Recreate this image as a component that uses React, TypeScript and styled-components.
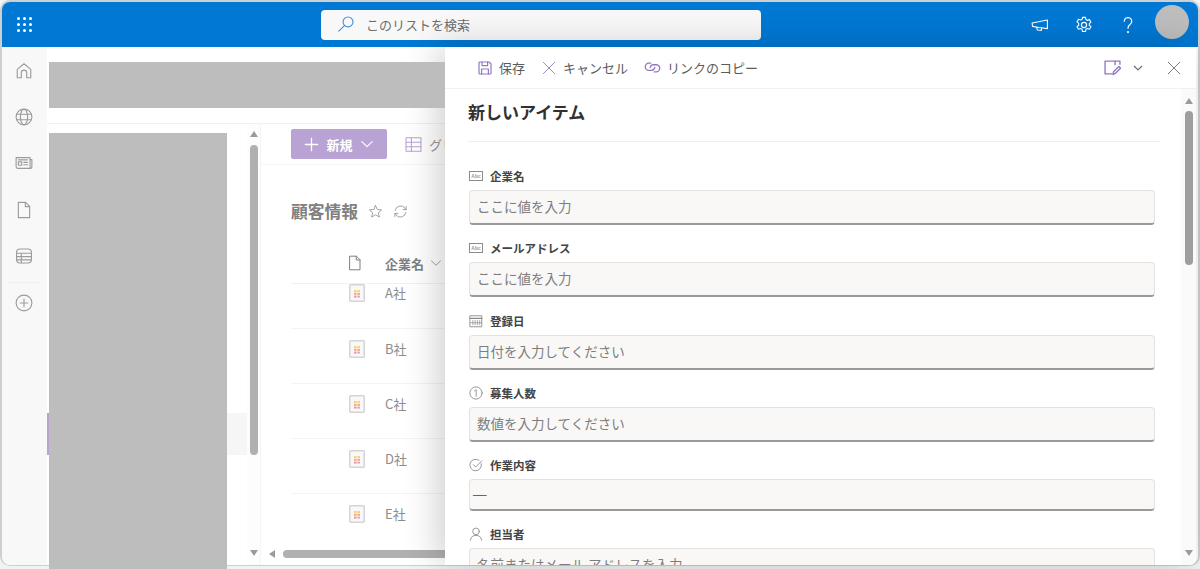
import * as React from 'react'
import styled, { createGlobalStyle } from 'styled-components'

const GlobalStyle = createGlobalStyle`
  html, body {
    margin: 0;
    height: 100%;
    overflow: hidden;
    background: #f2f2f2;
  }
  body {
    font-family: "Noto Sans CJK JP", "Noto Sans", sans-serif;
  }
  * {
    box-sizing: border-box;
  }
`

const AppWindow = styled.div`
  width: 1200px;
  height: 566px;
  border: 2px solid #cfcfcf;
  border-bottom-width: 1px;
  border-radius: 10px;
  background: #fff;
  display: flex;
  flex-direction: column;
`

const Header = styled.header`
  height: 45px;
  flex: none;
  background: #0078d4;
  border-radius: 8px 8px 0 0;
  display: flex;
  align-items: center;
  position: relative;
`

const Launcher = styled.div`
  width: 15px;
  margin-left: 15px;
  display: grid;
  grid-template-columns: repeat(3, 3px);
  gap: 3px;
`

const LauncherDot = styled.span`
  width: 3px;
  height: 3px;
  border-radius: 50%;
  background: #fff;
`

const SearchBox = styled.div`
  width: 440px;
  height: 30px;
  margin-left: 289px;
  padding: 0 0 1px 16px;
  border-radius: 4px;
  background: #f8f8f8;
  display: flex;
  align-items: center;
  gap: 11px;
  color: #6e6e6e;
  font-size: 13px;
`

const HeaderActions = styled.div`
  margin-left: auto;
  display: flex;
  align-items: center;
  color: #fff;
`

const HeaderIcon = styled.span<{ $width: number }>`
  width: ${({ $width }) => $width}px;
  display: flex;
  justify-content: center;
`

const Avatar = styled.div`
  width: 34px;
  height: 34px;
  margin: -5px 9px 0 5px;
  border-radius: 50%;
  background: #bdbdbd;
`

const Body = styled.div`
  flex: 1;
  min-height: 0;
  display: flex;
`

const Rail = styled.nav`
  width: 45px;
  flex: none;
  background: #f8f8f8;
  border-radius: 0 0 0 8px;
  display: flex;
  flex-direction: column;
  align-items: center;
  padding: 14px 1px 0 0;
  color: #9c9c9c;
`

const RailItem = styled.span`
  height: 46.2px;
  flex: none;
  display: flex;
  align-items: flex-start;
  padding-top: 1px;
`

const RailDivider = styled.span`
  width: 32px;
  height: 1px;
  flex: none;
  background: #f0f0f0;
  margin: -10px 0 10px;
`

const Main = styled.main`
  width: 398px;
  flex: none;
  display: flex;
  flex-direction: column;
`

const BannerArea = styled.div`
  height: 77px;
  flex: none;
  padding: 15px 0 0 2px;
  border-bottom: 1px solid #f1f1f1;
`

const Redaction = styled.div`
  background: #bdbdbd;
  position: relative;
  z-index: 3;
`

const Banner = styled(Redaction)`
  height: 46px;
`

const Lower = styled.div`
  flex: 1;
  min-height: 0;
  display: flex;
`

const SideNav = styled.div`
  width: 200px;
  flex: none;
  padding-top: 9px;
  display: flex;
  align-items: flex-start;
`

const SelectedMark = styled.span`
  width: 2px;
  height: 42px;
  margin-top: 280px;
  flex: none;
  background: #b8a3d4;
`

const NavBlock = styled(Redaction)`
  width: 178px;
  height: 436px;
  flex: none;
`

const SelectedRow = styled.span`
  width: 20px;
  height: 42px;
  margin-top: 280px;
  flex: none;
  background: #f6f6f6;
`

const VScroll = styled.div`
  width: 14px;
  flex: none;
  padding: 7px 0 9px;
  border-right: 1px solid #f4f4f4;
  display: flex;
  flex-direction: column;
  align-items: center;
  background: #fdfdfd;
`

const ArrowUp = styled.span`
  width: 0;
  height: 0;
  flex: none;
  border-left: 4.5px solid transparent;
  border-right: 4.5px solid transparent;
  border-bottom: 6px solid #9b9b9b;
`

const ArrowDown = styled(ArrowUp)`
  border-bottom: 0;
  border-top: 6px solid #9b9b9b;
  margin-top: auto;
`

const ArrowLeft = styled.span`
  width: 0;
  height: 0;
  flex: none;
  border-top: 4.5px solid transparent;
  border-bottom: 4.5px solid transparent;
  border-right: 6px solid #9b9b9b;
`

const VThumb = styled.span<{ $height: number; $gap: number }>`
  width: 8px;
  height: ${({ $height }) => $height}px;
  margin-top: ${({ $gap }) => $gap}px;
  flex: none;
  border-radius: 4px;
  background: #b0b0b0;
`

const Content = styled.div`
  flex: 1;
  min-width: 0;
  display: flex;
  flex-direction: column;
  white-space: nowrap;
`

const CommandBar = styled.div`
  height: 41px;
  flex: none;
  padding: 5px 0 0 30px;
  border-bottom: 1px solid #f5f5f5;
  display: flex;
  align-items: flex-start;
  gap: 18px;
`

const NewButton = styled.div`
  width: 96px;
  height: 30px;
  flex: none;
  border-radius: 2px;
  background: #b8a3d4;
  color: #fff;
  font-size: 13px;
  font-weight: 700;
  display: flex;
  align-items: center;
  justify-content: center;
  gap: 7px;
`

const GridLink = styled.div`
  height: 30px;
  display: flex;
  align-items: center;
  gap: 7px;
  color: #9a9a9a;
  font-size: 13px;
`

const TitleRow = styled.div`
  height: 80px;
  flex: none;
  padding: 35px 0 0 30px;
  display: flex;
  align-items: flex-start;
  gap: 10px;
  color: #9b9b9b;
`

const ListTitle = styled.h1`
  margin: 0;
  font-size: 16.8px;
  line-height: 22px;
  font-weight: 700;
  color: #808080;
`

const TitleIcon = styled.span`
  height: 22px;
  display: flex;
  align-items: center;
`

const ColumnHeader = styled.div`
  height: 39px;
  flex: none;
  margin-left: 30px;
  border-bottom: 1px solid #f1f1f1;
  display: flex;
  align-items: center;
  padding: 0 0 2px 56px;
  color: #7f7f7f;
  font-size: 13px;
  font-weight: 700;
  gap: 6px;
`

const ColumnName = styled.span`
  margin-left: 16px;
`

const RowList = styled.div`
  flex: 1;
  min-height: 0;
  overflow: hidden;
  margin-left: 30px;
`

const Row = styled.div<{ $first?: boolean }>`
  height: ${({ $first }) => ($first ? 45 : 55)}px;
  padding: ${({ $first }) => ($first ? 0 : 11)}px 0 0 58px;
  border-bottom: 1px solid #f3f3f3;
  display: flex;
  align-items: flex-start;
  gap: 20px;
  color: #8c8c8c;
  font-size: 13px;
  line-height: 18px;
  &:last-child {
    border-bottom: 0;
  }
`

const HScroll = styled.div`
  height: 18px;
  flex: none;
  padding: 0 0 4px 8px;
  display: flex;
  align-items: center;
  gap: 8px;
`

const HThumb = styled.span`
  flex: 1;
  height: 8px;
  border-radius: 4px 0 0 4px;
  background: #b0b0b0;
`

const Panel = styled.aside`
  width: 751px;
  flex: none;
  background: #fff;
  position: relative;
  z-index: 2;
  box-shadow: -6px 0 36px rgba(0, 0, 0, 0.2);
  border-radius: 0 0 8px 0;
  overflow: hidden;
  display: flex;
  flex-direction: column;
`

const PanelBar = styled.div`
  height: 42px;
  flex: none;
  padding: 0 15px 0 32px;
  border-bottom: 1px solid #f1f1f1;
  display: flex;
  align-items: center;
`

const PanelAction = styled.div<{ $gap: number; $space: number }>`
  display: flex;
  align-items: center;
  gap: ${({ $gap }) => $gap}px;
  margin-right: ${({ $space }) => $space}px;
  color: #5c5c5c;
  font-size: 13px;
`

const PanelRight = styled.div`
  margin-left: auto;
  display: flex;
  align-items: center;
  gap: 12px;
  color: #6a6a6a;
`

const CloseButton = styled.span`
  display: flex;
  margin-left: 12px;
`

const PanelBody = styled.div`
  flex: 1;
  min-height: 0;
  display: flex;
`

const Form = styled.div`
  flex: 1;
  min-width: 0;
  padding: 0 21px 0 23px;
  overflow: hidden;
`

const FormTitle = styled.h2`
  height: 53px;
  margin: 0 0 26px;
  padding-top: 10px;
  border-bottom: 1px solid #eeeeee;
  font-size: 17px;
  line-height: 26px;
  font-weight: 700;
  color: #323130;
`

const Fields = styled.div`
  display: flex;
  flex-direction: column;
  gap: 15.25px;
  padding: 0 5px 0 1px;
`

const Field = styled.div`
  display: flex;
  flex-direction: column;
  gap: 6px;
  flex: none;
`

const FieldLabel = styled.div`
  height: 16px;
  display: flex;
  align-items: center;
  gap: 7px;
  font-size: 11.5px;
  font-weight: 700;
  color: #444;
`

const FieldIcon = styled.span`
  width: 14px;
  display: flex;
  justify-content: center;
  color: #8a8a8a;
`

const FieldBox = styled.div<{ $height: number; $dropdown?: boolean }>`
  height: ${({ $height }) => $height}px;
  border: 1px solid #e4e2e0;
  border-bottom: 2px solid #9a9a9a;
  border-radius: 4px;
  background: #f9f8f7;
  display: flex;
  align-items: center;
  padding: 0 0 ${({ $dropdown }) => ($dropdown ? 0 : 2)}px
    ${({ $dropdown }) => ($dropdown ? 3 : 7)}px;
  color: ${({ $dropdown }) => ($dropdown ? '#666' : '#7d7d7d')};
  font-family: ${({ $dropdown }) =>
    $dropdown ? '"Liberation Sans", sans-serif' : 'inherit'};
  font-size: 13.5px;
`

const PanelScroll = styled.div`
  width: 15px;
  flex: none;
  padding: 9px 0 9px;
  background: #fafafa;
  display: flex;
  flex-direction: column;
  align-items: center;
`

const PanelThumb = styled(VThumb)`
  background: #9e9e9e;
`

type SvgProps = { size?: number; color?: string; weight?: number }

const Svg: React.FC<React.PropsWithChildren<SvgProps>> = ({
  size = 16,
  color = 'currentColor',
  weight = 1,
  children,
}) => (
  <svg
    width={size}
    height={size}
    viewBox="0 0 16 16"
    fill="none"
    stroke={color}
    strokeWidth={weight}
    strokeLinecap="round"
    strokeLinejoin="round"
  >
    {children}
  </svg>
)

const PURPLE = '#9478c4'

const SearchIcon = () => (
  <Svg size={18} color="#4a90d9">
    <circle cx="9.8" cy="6.2" r="4.4" />
    <path d="M6.6 9.4 1.6 14.4" />
  </Svg>
)

const MegaphoneIcon = () => (
  <Svg size={18}>
    <path d="M1 6.2 14.6 3.6v7.6L7 10.2 1.4 9.2z" />
    <path d="M5 10l.6 2.4 3.6.4.3-2.3" />
  </Svg>
)

const GearIcon = () => (
  <Svg size={18}>
    <circle cx="8" cy="8" r="2.3" />
    <path d="M6.7 1.2h2.6l.4 2 1.3.7 1.9-.7 1.3 2.3-1.5 1.3v1.4l1.5 1.3-1.3 2.3-1.9-.7-1.3.7-.4 2H6.7l-.4-2-1.3-.7-1.9.7-1.3-2.3 1.5-1.3V6.5L1.8 5.2l1.3-2.3 1.9.7 1.3-.7z" />
  </Svg>
)

const HelpIcon = () => (
  <Svg size={20}>
    <path d="M5 5a3 3 0 1 1 4.6 2.6C8.4 8.4 8 9 8 10.6" />
    <circle cx="8" cy="13.6" r="0.4" />
  </Svg>
)

const HomeIcon = () => (
  <Svg size={18}>
    <path d="M2 14V6.6L8 1.6l6 5V14h-3.6V9.6a2.4 2.4 0 0 0-4.8 0V14z" />
  </Svg>
)

const GlobeIcon = () => (
  <Svg size={18}>
    <circle cx="8" cy="8" r="7" />
    <ellipse cx="8" cy="8" rx="3.2" ry="7" />
    <path d="M1.4 5.6h13.2M1.4 10.4h13.2" />
  </Svg>
)

const NewsIcon = () => (
  <Svg size={18}>
    <path d="M1 3.2h12.4v9.6H2.4A1.4 1.4 0 0 1 1 11.4z" />
    <path d="M13.4 5H15v6.4a1.4 1.4 0 0 1-1.6 1.4" />
    <rect x="3" y="7" width="3" height="3" />
    <path d="M3 5.2h8M7.8 7.4h3.4M7.8 9.6h3.4" />
  </Svg>
)

const FileIcon = ({ size = 18 }: SvgProps) => (
  <Svg size={size}>
    <path d="M3 1.2h6.4L13 4.8v10H3z" />
    <path d="M9.2 1.2v3.8H13" />
  </Svg>
)

const TableIcon = () => (
  <Svg size={18}>
    <rect x="1.4" y="1.8" width="13.2" height="12.4" rx="3" />
    <path d="M1.4 5.6h13.2M1.4 8.6h13.2M1.4 11.4h13.2M5.6 5.6v8.4" />
  </Svg>
)

const PlusCircleIcon = () => (
  <Svg size={18}>
    <circle cx="8" cy="8" r="7" />
    <path d="M8 4.6v6.8M4.6 8h6.8" />
  </Svg>
)

const PlusIcon = () => (
  <Svg size={15} color="#fff" weight={1.4}>
    <path d="M8 1.4v13.2M1.4 8h13.2" />
  </Svg>
)

const ChevronIcon = ({ size = 14, weight = 1 }: SvgProps) => (
  <Svg size={size} weight={weight}>
    <path d="M2 5.2 8 11l6-5.8" />
  </Svg>
)

const GridIcon = () => (
  <Svg size={17} color="#b8a3d4">
    <rect x="1" y="1.6" width="14" height="12.8" />
    <path d="M1 5.8h14M1 10.2h14M6 1.6v12.8" />
  </Svg>
)

const StarIcon = () => (
  <Svg size={15}>
    <path d="m8 1.6 1.9 4.3 4.6.4-3.5 3 1.1 4.6L8 11.5l-4.1 2.4L5 9.3l-3.5-3 4.6-.4z" />
  </Svg>
)

const RefreshIcon = () => (
  <Svg size={15}>
    <path d="M2.2 7A6 6 0 0 1 13 4.6l1 1.4M13.8 9A6 6 0 0 1 3 11.4L2 10" />
    <path d="M14 2.6V6h-3.2M2 13.4V10h3.2" />
  </Svg>
)

const ThumbIcon = () => (
  <svg width="16" height="18" viewBox="0 0 16 18">
    <rect x="0.75" y="0.75" width="14.5" height="16.5" rx="1" fill="#f8f8f8" stroke="#d4d4d4" strokeWidth="1.5" />
    <rect x="5" y="6" width="2.6" height="2" fill="#f6d27a" />
    <rect x="8.4" y="6" width="2.6" height="2" fill="#f6d27a" />
    <rect x="5" y="8.8" width="2.6" height="2" fill="#f4a97f" />
    <rect x="8.4" y="8.8" width="2.6" height="2" fill="#f4a97f" />
    <rect x="5" y="11.6" width="2.6" height="2" fill="#ee9a9a" />
    <rect x="8.4" y="11.6" width="2.6" height="2" fill="#d9a8d8" />
  </svg>
)

const SaveIcon = () => (
  <Svg size={16} color={PURPLE} weight={1.2}>
    <path d="M2 3a1 1 0 0 1 1-1h9l2 2v9a1 1 0 0 1-1 1H3a1 1 0 0 1-1-1z" />
    <path d="M5 2v3.6h5.6V2M4.6 14V9h6.8v5" />
  </Svg>
)

const CrossIcon = ({ size = 15, color = 'currentColor' }: SvgProps) => (
  <Svg size={size} color={color}>
    <path d="M1.5 1.5l13 13M14.5 1.5l-13 13" />
  </Svg>
)

const LinkIcon = () => (
  <Svg size={17} color={PURPLE} weight={1.2}>
    <path d="M6.4 3.8H4.6a3.4 3.4 0 0 0 0 6.8h2.6a3.4 3.4 0 0 0 3-2.6" />
    <path d="M9.6 12.2h1.8a3.4 3.4 0 0 0 0-6.8H8.8a3.4 3.4 0 0 0-3 2.6" />
  </Svg>
)

const EditFormIcon = () => (
  <Svg size={17} color={PURPLE} weight={1.3}>
    <path d="M15 5V2H1v12h6.4" />
    <path d="M10.4 2v3.4" />
    <path d="m8.4 14.6.6-2.6 5-5 1.6 1.6-5 5z" />
  </Svg>
)

const AbcGlyph = styled.text`
  font-family: "Liberation Sans", sans-serif;
  font-size: 5px;
  fill: #9a9a9a;
`

const TextFieldIcon = () => (
  <svg width="14" height="10" viewBox="0 0 14 10">
    <rect x="0.5" y="0.5" width="13" height="9" fill="none" stroke="#8a8a8a" />
    <AbcGlyph x="7" y="6.8" textAnchor="middle">
      Abc
    </AbcGlyph>
  </svg>
)

const CalendarFieldIcon = () => (
  <Svg size={14}>
    <rect x="1.4" y="2" width="13.2" height="12.6" />
    <path d="M1.4 5h13.2" strokeWidth="1.6" />
    <path d="M4.4 7.4v5M7 7.4v5M9.6 7.4v5M12.2 7.4v5M1.6 10h12.8" strokeWidth="0.8" />
  </Svg>
)

const NumberFieldIcon = () => (
  <Svg size={14}>
    <circle cx="8" cy="8" r="7" />
    <path d="M6.4 5.4 8.2 4.2v7.6" />
  </Svg>
)

const ChoiceFieldIcon = () => (
  <Svg size={14}>
    <path d="M14 6.4A6.6 6.6 0 1 1 11.4 2.6" />
    <path d="M5 7.6 7.6 10.4 14.6 3.2" />
  </Svg>
)

const PersonFieldIcon = () => (
  <Svg size={14}>
    <circle cx="8" cy="5" r="3.8" />
    <path d="M1.6 15c.4-3.6 2.6-5.4 6.4-5.4s6 1.8 6.4 5.4" />
  </Svg>
)

const railIcons = [HomeIcon, GlobeIcon, NewsIcon, FileIcon, TableIcon]

const companies = ['A社', 'B社', 'C社', 'D社', 'E社']

const fields = [
  { label: '企業名', icon: TextFieldIcon, value: 'ここに値を入力', height: 35 },
  { label: 'メールアドレス', icon: TextFieldIcon, value: 'ここに値を入力', height: 35 },
  { label: '登録日', icon: CalendarFieldIcon, value: '日付を入力してください', height: 35 },
  { label: '募集人数', icon: NumberFieldIcon, value: '数値を入力してください', height: 35 },
  { label: '作業内容', icon: ChoiceFieldIcon, value: '—', height: 32, dropdown: true },
  { label: '担当者', icon: PersonFieldIcon, value: '名前またはメール アドレスを入力', height: 35 },
]

export default function App() {
  return (
    <>
      <GlobalStyle />
      <AppWindow>
        <Header>
          <Launcher>
            {Array.from({ length: 9 }).map((_, index) => (
              <LauncherDot key={index} />
            ))}
          </Launcher>
          <SearchBox>
            <SearchIcon />
            このリストを検索
          </SearchBox>
          <HeaderActions>
            <HeaderIcon $width={44}>
              <MegaphoneIcon />
            </HeaderIcon>
            <HeaderIcon $width={44}>
              <GearIcon />
            </HeaderIcon>
            <HeaderIcon $width={44}>
              <HelpIcon />
            </HeaderIcon>
            <Avatar />
          </HeaderActions>
        </Header>
        <Body>
          <Rail>
            {railIcons.map((Icon, index) => (
              <RailItem key={index}>
                <Icon />
              </RailItem>
            ))}
            <RailDivider />
            <RailItem>
              <PlusCircleIcon />
            </RailItem>
          </Rail>
          <Main>
            <BannerArea>
              <Banner />
            </BannerArea>
            <Lower>
              <SideNav>
                <SelectedMark />
                <NavBlock />
                <SelectedRow />
              </SideNav>
              <VScroll>
                <ArrowUp />
                <VThumb $height={310} $gap={8} />
                <ArrowDown />
              </VScroll>
              <Content>
                <CommandBar>
                  <NewButton>
                    <PlusIcon />
                    新規
                    <ChevronIcon size={14} weight={1.3} />
                  </NewButton>
                  <GridLink>
                    <GridIcon />
                    グリッドビューで編集
                  </GridLink>
                </CommandBar>
                <TitleRow>
                  <ListTitle>顧客情報</ListTitle>
                  <TitleIcon>
                    <StarIcon />
                  </TitleIcon>
                  <TitleIcon>
                    <RefreshIcon />
                  </TitleIcon>
                </TitleRow>
                <ColumnHeader>
                  <FileIcon size={16} />
                  <ColumnName>企業名</ColumnName>
                  <ChevronIcon size={12} />
                </ColumnHeader>
                <RowList>
                  {companies.map((name, index) => (
                    <Row key={name} $first={index === 0}>
                      <ThumbIcon />
                      {name}
                    </Row>
                  ))}
                </RowList>
                <HScroll>
                  <ArrowLeft />
                  <HThumb />
                </HScroll>
              </Content>
            </Lower>
          </Main>
          <Panel>
            <PanelBar>
              <PanelAction $gap={6} $space={17}>
                <SaveIcon />
                保存
              </PanelAction>
              <PanelAction $gap={7} $space={16}>
                <CrossIcon size={14} color={PURPLE} />
                キャンセル
              </PanelAction>
              <PanelAction $gap={6} $space={0}>
                <LinkIcon />
                リンクのコピー
              </PanelAction>
              <PanelRight>
                <EditFormIcon />
                <ChevronIcon size={10} weight={1.8} />
                <CloseButton>
                  <CrossIcon size={14} />
                </CloseButton>
              </PanelRight>
            </PanelBar>
            <PanelBody>
              <Form>
                <FormTitle>新しいアイテム</FormTitle>
                <Fields>
                  {fields.map(({ label, icon: Icon, value, height, dropdown }) => (
                    <Field key={label}>
                      <FieldLabel>
                        <FieldIcon>
                          <Icon />
                        </FieldIcon>
                        {label}
                      </FieldLabel>
                      <FieldBox $height={height} $dropdown={dropdown}>
                        {value}
                      </FieldBox>
                    </Field>
                  ))}
                </Fields>
              </Form>
              <PanelScroll>
                <ArrowUp />
                <PanelThumb $height={154} $gap={7} />
                <ArrowDown />
              </PanelScroll>
            </PanelBody>
          </Panel>
        </Body>
      </AppWindow>
    </>
  )
}
